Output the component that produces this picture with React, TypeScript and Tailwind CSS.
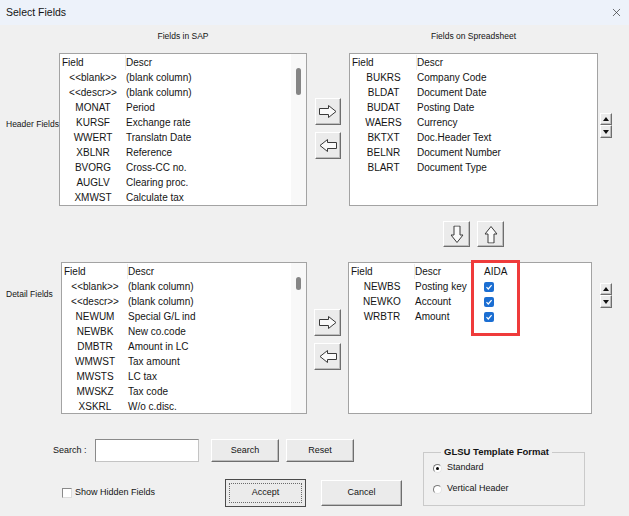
import { X } from "lucide-react";

type Row = [string, string];

const sapHeader: Row[] = [
  ["<<blank>>", "(blank column)"],
  ["<<descr>>", "(blank column)"],
  ["MONAT", "Period"],
  ["KURSF", "Exchange rate"],
  ["WWERT", "Translatn Date"],
  ["XBLNR", "Reference"],
  ["BVORG", "Cross-CC no."],
  ["AUGLV", "Clearing proc."],
  ["XMWST", "Calculate tax"],
];

const sheetHeader: Row[] = [
  ["BUKRS", "Company Code"],
  ["BLDAT", "Document Date"],
  ["BUDAT", "Posting Date"],
  ["WAERS", "Currency"],
  ["BKTXT", "Doc.Header Text"],
  ["BELNR", "Document Number"],
  ["BLART", "Document Type"],
];

const sapDetail: Row[] = [
  ["<<blank>>", "(blank column)"],
  ["<<descr>>", "(blank column)"],
  ["NEWUM", "Special G/L ind"],
  ["NEWBK", "New co.code"],
  ["DMBTR", "Amount in LC"],
  ["WMWST", "Tax amount"],
  ["MWSTS", "LC tax"],
  ["MWSKZ", "Tax code"],
  ["XSKRL", "W/o c.disc."],
];

const sheetDetail: Row[] = [
  ["NEWBS", "Posting key"],
  ["NEWKO", "Account"],
  ["WRBTR", "Amount"],
];

const raised =
  "flex items-center justify-center bg-[#ebebeb] border border-t-white border-l-white border-r-[#6e6e6e] border-b-[#6e6e6e] shadow-[inset_-1px_-1px_0_#bdbdbd]";

function Arrow({ dir }: { dir: "right" | "left" | "down" | "up" }) {
  const rot = dir === "left" ? "rotate-180" : dir === "down" ? "rotate-90" : dir === "up" ? "-rotate-90" : "";
  return (
    <svg width="18" height="13" viewBox="0 0 18 13" className={rot}>
      <polygon
        points="0.5,3.5 9.5,3.5 9.5,0.5 17,6.5 9.5,12.5 9.5,9.5 0.5,9.5"
        fill="#fafafa"
        stroke="#3a3a3a"
        strokeWidth="1"
      />
    </svg>
  );
}

function Spin() {
  return (
    <div className="flex flex-col">
      <div className={`${raised} h-[12px] w-[12px]`}>
        <svg width="6" height="4" viewBox="0 0 6 4">
          <polygon points="0,4 3,0 6,4" fill="#111" />
        </svg>
      </div>
      <div className={`${raised} h-[13px] w-[12px]`}>
        <svg width="6" height="4" viewBox="0 0 6 4">
          <polygon points="0,0 6,0 3,4" fill="#111" />
        </svg>
      </div>
    </div>
  );
}

function BlueCheck() {
  return (
    <div className="flex h-[10px] w-[10px] items-center justify-center rounded-[2px] bg-[#1b6ed2]">
      <svg width="8" height="8" viewBox="0 0 8 8">
        <polyline points="1.5,4.2 3.3,6 6.6,2.2" fill="none" stroke="white" strokeWidth="1.2" />
      </svg>
    </div>
  );
}

function ListBox({
  width,
  fieldW,
  rows,
  thumb,
  aida,
}: {
  width: string;
  fieldW: string;
  rows: Row[];
  thumb?: string;
  aida?: boolean;
}) {
  return (
    <div className={`relative flex h-full border border-[#a3a3a3] bg-white ${width}`}>
      <div className="flex-1 pt-[1px] text-[10px] leading-[15px] text-[#141414]">
        <div className="flex h-[15px]">
          <div className={`${fieldW} border-r border-[#ececec] pl-[2px]`}>Field</div>
          <div className={aida ? "w-[69px]" : "flex-1"}>Descr</div>
          {aida && <div>AIDA</div>}
        </div>
        {rows.map(([f, d]) => (
          <div key={f + d} className="flex h-[15px]">
            <div className={`${fieldW} text-center`}>{f}</div>
            <div className={aida ? "w-[69px]" : "flex-1"}>{d}</div>
            {aida && (
              <div className="flex items-center">
                <BlueCheck />
              </div>
            )}
          </div>
        ))}
      </div>
      {thumb && (
        <div className="w-[15px] bg-[#f8f8f8]">
          <div className={`ml-[5px] mt-[14px] w-[5px] rounded-full bg-[#858585] ${thumb}`} />
        </div>
      )}
      {aida && (
        <div className="absolute left-[122px] top-[-3px] h-[76px] w-[49px] border-[3px] border-[#ef3b3b]" />
      )}
    </div>
  );
}

export default function App() {
  return (
    <div className="flex h-[516px] w-[629px] flex-col overflow-hidden bg-[#f0f0f0] font-['Liberation_Sans',Arial,sans-serif] text-[#141414]">
      <div className="flex h-[25px] items-center justify-between bg-[#edf2fa] pl-[6px] pr-[6px]">
        <span className="text-[10.5px]">Select Fields</span>
        <X size={13} strokeWidth={1.3} className="text-[#333]" />
      </div>

      <div className="flex h-[22px] items-center pl-[59px] text-[8.5px]">
        <div className="w-[248px] text-center">Fields in SAP</div>
        <div className="w-[42px]" />
        <div className="w-[249px] text-center">Fields on Spreadsheet</div>
      </div>

      <div className="mt-[6px] flex h-[153px]">
        <div className="w-[59px] whitespace-nowrap pl-[6px] pt-[65px] text-[8.5px] leading-[12px]">Header Fields</div>
        <ListBox width="w-[248px]" fieldW="w-[66px]" rows={sapHeader} thumb="h-[27px]" />
        <div className="flex w-[42px] flex-col gap-[7px] pl-[8px] pt-[45px]">
          <div className={`${raised} h-[27px] w-[26px]`}>
            <Arrow dir="right" />
          </div>
          <div className={`${raised} h-[27px] w-[26px]`}>
            <Arrow dir="left" />
          </div>
        </div>
        <ListBox width="w-[249px]" fieldW="w-[67px]" rows={sheetHeader} />
        <div className="pl-[2px] pt-[60px]">
          <Spin />
        </div>
      </div>

      <div className="mt-[15px] flex h-[26px] gap-[7px] pl-[443px]">
        <div className={`${raised} h-[26px] w-[27px]`}>
          <Arrow dir="down" />
        </div>
        <div className={`${raised} h-[26px] w-[27px]`}>
          <Arrow dir="up" />
        </div>
      </div>

      <div className="mt-[15px] flex h-[152px]">
        <div className="w-[61px] whitespace-nowrap pl-[6px] pt-[26px] text-[8.5px] leading-[12px]">Detail Fields</div>
        <ListBox width="w-[246px]" fieldW="w-[66px]" rows={sapDetail} thumb="h-[13px]" />
        <div className="flex w-[41px] flex-col gap-[7px] pl-[7px] pt-[47px]">
          <div className={`${raised} h-[27px] w-[27px]`}>
            <Arrow dir="right" />
          </div>
          <div className={`${raised} h-[27px] w-[27px]`}>
            <Arrow dir="left" />
          </div>
        </div>
        <ListBox width="w-[244px]" fieldW="w-[66px]" rows={sheetDetail} aida />
        <div className="pl-[8px] pt-[21px]">
          <Spin />
        </div>
      </div>

      <div className="mt-[25px] flex text-[9px]">
        <div className="w-[423px]">
          <div className="flex h-[23px] items-center pl-[53px]">
            <span className="w-[42px]">Search :</span>
            <div className="h-[23px] w-[104px] border border-[#c4c4c4] border-l-[#8a8a8a] border-t-[#8a8a8a] bg-white" />
            <div className={`${raised} ml-[12px] h-[23px] w-[68px]`}>Search</div>
            <div className={`${raised} ml-[7px] h-[23px] w-[68px]`}>Reset</div>
          </div>
          <div className="mt-[17px] flex h-[28px] items-center pl-[62px]">
            <div className="flex w-[163px] items-center">
              <div className="h-[10px] w-[10px] border border-[#8a8a8a] border-b-[#dcdcdc] border-r-[#dcdcdc] bg-white" />
              <span className="ml-[3px]">Show Hidden Fields</span>
            </div>
            <div className="flex h-[28px] w-[81px] items-center justify-center border border-[#4a4a4a] bg-[#ebebeb] p-[3px]">
              <div className="flex h-full w-full items-center justify-center border border-dotted border-[#6a6a6a]">
                Accept
              </div>
            </div>
            <div className={`${raised} ml-[15px] h-[26px] w-[81px]`}>Cancel</div>
          </div>
        </div>
        <fieldset className="mt-[7px] h-[60px] w-[162px] border border-[#cacaca] pl-[9px]">
          <legend className="ml-[8px] px-[3px] text-[9.5px] font-bold leading-[12px]">GLSU Template Format</legend>
          <div className="mt-[3px] flex h-[14px] items-center">
            <div className="flex h-[9px] w-[9px] items-center justify-center rounded-full border border-[#7a7a7a] border-b-[#e4e4e4] border-r-[#e4e4e4] bg-white">
              <div className="h-[3px] w-[3px] rounded-full bg-black" />
            </div>
            <span className="ml-[5px]">Standard</span>
          </div>
          <div className="mt-[7px] flex h-[14px] items-center">
            <div className="h-[9px] w-[9px] rounded-full border border-[#7a7a7a] border-b-[#e4e4e4] border-r-[#e4e4e4] bg-white" />
            <span className="ml-[5px]">Vertical Header</span>
          </div>
        </fieldset>
      </div>
    </div>
  );
}
